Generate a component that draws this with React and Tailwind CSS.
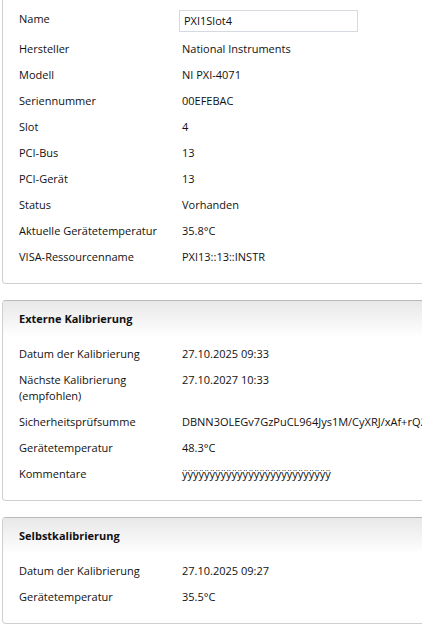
import React from 'react'

const device = [
  ['Hersteller', 'National Instruments'],
  ['Modell', 'NI PXI-4071'],
  ['Seriennummer', '00EFEBAC'],
  ['Slot', '4'],
  ['PCI-Bus', '13'],
  ['PCI-Gerät', '13'],
  ['Status', 'Vorhanden'],
  ['Aktuelle Gerätetemperatur', '35.8°C'],
  ['VISA-Ressourcenname', 'PXI13::13::INSTR'],
]

const external = [
  ['Datum der Kalibrierung', '27.10.2025 09:33'],
  [['Nächste Kalibrierung', '(empfohlen)'], '27.10.2027 10:33'],
  ['Sicherheitsprüfsumme', 'DBNN3OLEGv7GzPuCL964Jys1M/CyXRJ/xAf+rQ2k='],
  ['Gerätetemperatur', '48.3°C'],
  ['Kommentare', 'ÿÿÿÿÿÿÿÿÿÿÿÿÿÿÿÿÿÿÿÿÿÿÿÿÿÿÿ'],
]

const self = [
  ['Datum der Kalibrierung', '27.10.2025 09:27'],
  ['Gerätetemperatur', '35.5°C'],
]

function Row({ label, value }) {
  const lines = Array.isArray(label) ? label : [label]
  return (
    <div className="flex py-[5px] leading-[16px]">
      <div className="w-[163px] shrink-0">
        {lines.map(l => (
          <div key={l}>{l}</div>
        ))}
      </div>
      <div className="whitespace-nowrap">{value}</div>
    </div>
  )
}

function Panel({ title, rows, className = '' }) {
  return (
    <section className={`rounded-[4px] border border-[#cfcfcf] border-t-[#b9b9b9] ${className}`}>
      <h2 className="h-[36px] flex items-center px-[16px] font-bold bg-gradient-to-b from-[#e8e8e8] to-white rounded-t-[4px]">
        {title}
      </h2>
      <div className="pt-[4px] pb-[13px] px-[16px]">
        {rows.map(([l, v], i) => (
          <Row key={i} label={l} value={v} />
        ))}
      </div>
    </section>
  )
}

export default function App() {
  return (
    <div
      className="w-[422px] h-[624px] overflow-hidden bg-white text-[11px] text-[#111]"
      style={{ fontFamily: '"Open Sans", "Noto Sans", sans-serif' }}
    >
      <div className="ml-[2px] w-[460px]">
        <section className="rounded-b-[4px] border border-t-0 border-[#cfcfcf] pt-[10px] pb-[13px] px-[16px]">
          <div className="flex h-[22px]">
            <div className="w-[160px] shrink-0 leading-[18px]">Name</div>
            <div className="w-[179px] h-[22px] border border-[#d5dae1] px-[4px] leading-[20px]">PXI1Slot4</div>
          </div>
          <div className="mt-[4px]">
            {device.map(([l, v]) => (
              <Row key={l} label={l} value={v} />
            ))}
          </div>
        </section>
        <Panel title="Externe Kalibrierung" rows={external} className="mt-[16px]" />
        <Panel title="Selbstkalibrierung" rows={self} className="mt-[16px]" />
      </div>
    </div>
  )
}
